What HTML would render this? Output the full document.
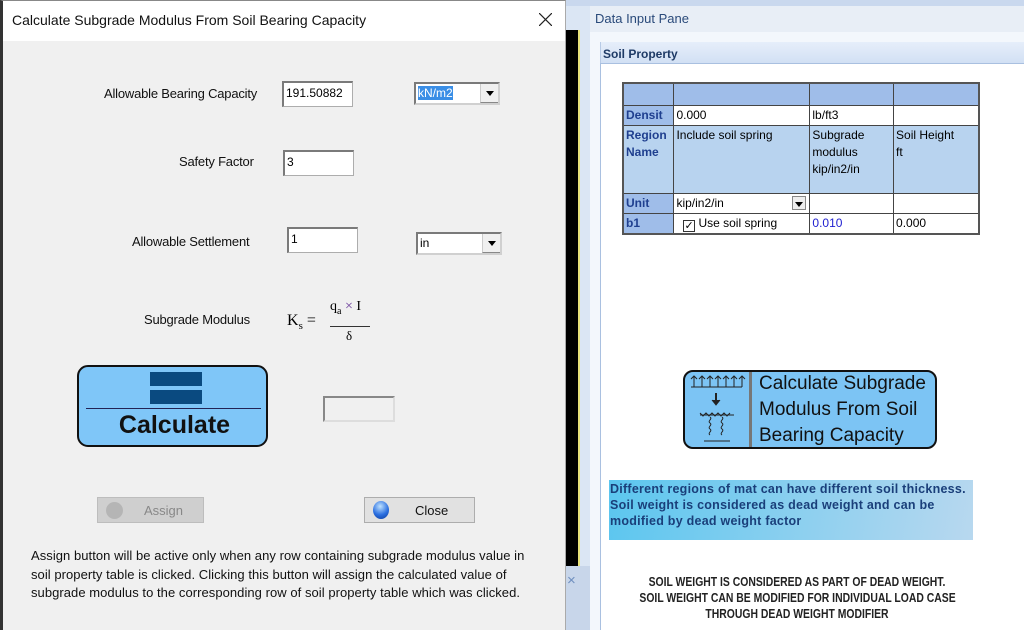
<!DOCTYPE html>
<html><head><meta charset="utf-8"><style>
*{box-sizing:border-box;margin:0;padding:0}
body{width:1024px;height:630px;position:relative;overflow:hidden;background:#dbe6f4;font-family:"Liberation Sans",sans-serif;font-size:12px;color:#000}
.a{position:absolute}
.lbl{font-size:13px;letter-spacing:-0.2px;color:#111}
.inp{background:#fff;border:1px solid #adadad;border-top:2px solid #7a7a7a;border-left:2px solid #7a7a7a;font-size:12px;padding:3px 2px;line-height:14px}
.dd{background:#fff;border:2px solid #7a7a7a;border-right-color:#d0d0d0;border-bottom-color:#d0d0d0;font-size:12px;padding:2px 2px}
.arr{position:absolute;right:0;top:0;bottom:0;width:18px;background:#f0f0f0;border-left:1px solid #ccc;border-bottom:1px solid #888}
.arr:after{content:"";position:absolute;left:5px;top:7px;border-left:4px solid transparent;border-right:4px solid transparent;border-top:5px solid #000}
table{border-collapse:collapse}
td{border:1px solid #444;font-size:12px;vertical-align:top;padding:1px 2px;line-height:17px}
.h{background:#9fbde9;font-weight:bold;color:#1f3f8f}
.b{background:#b8d3ef}
.nw{white-space:nowrap}
</style></head><body>
<div class="a" style="left:566px;top:0;width:458px;height:6px;background:#c9d8ee"></div>
<div class="a" style="left:566px;top:30px;width:14px;height:536px;background:#000;border-right:2px solid #e8e27a"></div>
<div class="a" style="left:566px;top:566px;width:24px;height:64px;background:#c8d6ea"></div>
<div class="a" style="left:567px;top:572px;font-size:15px;color:#6f8fbf">×</div>
<div class="a" style="left:590px;top:6px;width:434px;height:26px;background:#e8eef6"></div>
<div class="a" style="left:595px;top:11px;font-size:13px;color:#2a4a7a">Data Input Pane</div>
<div class="a" style="left:590px;top:32px;width:434px;height:598px;background:#f3f7fc"></div>
<div class="a" style="left:600px;top:42px;width:424px;height:21px;background:linear-gradient(#e6eefa,#d2e0f4);border-left:1px solid #b8cbe6"></div>
<div class="a" style="left:603px;top:47px;font-size:12px;font-weight:bold;color:#1e3a66">Soil Property</div>
<div class="a" style="left:600px;top:63px;width:424px;height:567px;background:#fff;border-left:1px solid #a9c0e0;border-top:1px solid #a9c0e0"></div>
<table class="a" style="left:622px;top:82px;width:358px;border:2px solid #555">
<tr style="height:22px"><td class="h" style="width:51px"></td><td class="h" style="width:137px"></td><td class="h" style="width:84px"></td><td class="h" style="width:86px"></td></tr>
<tr style="height:20px"><td class="h">Densit</td><td>0.000</td><td>lb/ft3</td><td></td></tr>
<tr style="height:68px"><td class="b" style="font-weight:bold;color:#1f3f8f;line-height:17px">Region Name</td><td class="b">Include soil spring</td><td class="b" style="line-height:17px">Subgrade modulus kip/in2/in</td><td class="b">Soil Height<br>ft</td></tr>
<tr style="height:19px"><td class="h">Unit</td><td style="position:relative">kip/in2/in<span style="position:absolute;right:3px;top:2px;width:14px;height:14px;background:#eee;border:1px solid #888"></span><span style="position:absolute;right:6px;top:8px;border-left:4px solid transparent;border-right:4px solid transparent;border-top:5px solid #000"></span></td><td></td><td></td></tr>
<tr style="height:19px"><td class="h">b1</td><td>&nbsp;&nbsp;<span style="display:inline-block;width:12px;height:12px;border:1px solid #333;vertical-align:-2px;font-size:11px;line-height:11px;text-align:center">✓</span> Use soil spring</td><td style="color:#2020d0">0.010</td><td>0.000</td></tr>
</table>
<div class="a" style="left:683px;top:370px;width:254px;height:79px;background:#7cc4f4;border:2px solid #111;border-radius:10px"></div>
<div class="a" style="left:749px;top:372px;width:3px;height:75px;background:#777"></div>
<svg class="a" style="left:688px;top:373px" width="58" height="72" viewBox="0 0 58 72" fill="none" stroke="#222" stroke-width="1">
<path d="M3 14H54"/><path d="M6 14V3M14 14V3M22 14V3M30 14V3M38 14V3M46 14V3M54 14V3"/>
<path d="M3 6l3-3 3 3M11 6l3-3 3 3M19 6l3-3 3 3M27 6l3-3 3 3M35 6l3-3 3 3M43 6l3-3 3 3M51 6l3-3 3 3"/>
<path d="M28 20v10" stroke-width="2"/><path d="M24 27l4 5 4-5" fill="#222"/>
<path d="M12 42h34M12 40l3 3 3-3 3 3 3-3 3 3 3-3 3 3 3-3 3 3 3-3"/>
<path d="M22 44c3 2-3 4 0 6s-3 4 0 6s-3 4 0 6M34 44c3 2-3 4 0 6s-3 4 0 6s-3 4 0 6M16 68h26"/>
</svg>
<div class="a nw" style="left:759px;top:371px;font-size:19px;line-height:26px;color:#111">Calculate Subgrade<br>Modulus From Soil<br>Bearing Capacity</div>
<div class="a" style="left:609px;top:480px;width:364px;height:60px;background:linear-gradient(100deg,#5bc6ef,#b8d8ef)"></div>
<div class="a nw" style="left:610px;top:481px;font-size:12.5px;letter-spacing:0.25px;line-height:16px;color:#1a3f7a;font-weight:bold">Different regions of mat can have different soil thickness.<br>Soil weight is considered as dead weight and can be<br>modified by dead weight factor</div>
<div class="a nw" style="left:600px;top:574px;width:394px;text-align:center;font-size:13px;line-height:16px;font-weight:bold;transform:scaleX(0.8);color:#222">SOIL WEIGHT IS CONSIDERED AS PART OF DEAD WEIGHT.<br>SOIL WEIGHT CAN BE MODIFIED FOR INDIVIDUAL LOAD CASE<br>THROUGH DEAD WEIGHT MODIFIER</div>

<div class="a" style="left:0;top:0;width:566px;height:630px;background:#f0f0f0;border-left:3px solid #333;border-right:1px solid #aaa;border-top:1px solid #888"></div>
<div class="a" style="left:3px;top:1px;width:562px;height:40px;background:#fff"></div>
<div class="a" style="left:12px;top:12px;font-size:14px;color:#111">Calculate Subgrade Modulus From Soil Bearing Capacity</div>
<svg class="a" style="left:539px;top:13px" width="13" height="13" viewBox="0 0 13 13" stroke="#222" stroke-width="1.2"><path d="M0 0L13 13M13 0L0 13"/></svg>

<div class="a lbl" style="left:104px;top:86px">Allowable Bearing Capacity</div>
<div class="a inp" style="left:282px;top:81px;width:71px;height:26px">191.50882</div>
<div class="a dd" style="left:414px;top:82px;width:86px;height:23px"><span style="background:#3a8ee6;color:#fff">kN/m2</span><span class="arr"></span></div>
<div class="a lbl" style="left:179px;top:154px">Safety Factor</div>
<div class="a inp" style="left:283px;top:150px;width:71px;height:26px">3</div>
<div class="a lbl" style="left:132px;top:234px">Allowable Settlement</div>
<div class="a inp" style="left:287px;top:227px;width:71px;height:26px">1</div>
<div class="a dd" style="left:416px;top:232px;width:86px;height:23px">in<span class="arr"></span></div>
<div class="a lbl" style="left:144px;top:312px">Subgrade Modulus</div>
<div class="a" style="left:287px;top:312px;font-family:'Liberation Serif',serif;font-size:16px">K<sub style="font-size:11px">s</sub> =</div>
<div class="a" style="left:330px;top:299px;font-family:'Liberation Serif',serif;font-size:14px">q<sub style="font-size:10px">a</sub> <span style="color:#6a3a9a">×</span> I</div>
<div class="a" style="left:330px;top:326px;width:40px;height:1px;background:#333"></div>
<div class="a" style="left:346px;top:328px;font-family:'Liberation Serif',serif;font-size:13px">δ</div>
<div class="a" style="left:77px;top:365px;width:191px;height:82px;background:#7fc6f8;border:2px solid #111;border-radius:11px"></div>
<div class="a" style="left:150px;top:372px;width:52px;height:14px;background:#0a4a80"></div>
<div class="a" style="left:150px;top:390px;width:52px;height:14px;background:#0a4a80"></div>
<div class="a" style="left:86px;top:408px;width:175px;height:1px;background:#225"></div>
<div class="a" style="left:77px;top:411px;width:195px;text-align:center;font-size:25px;font-weight:bold;color:#111">Calculate</div>
<div class="a" style="left:323px;top:396px;width:72px;height:26px;border:2px solid #888;border-right-color:#ddd;border-bottom-color:#ddd;background:#f0f0f0"></div>
<div class="a" style="left:97px;top:497px;width:107px;height:26px;background:#cfcfcf;border:1px solid #bdbdbd"></div>
<div class="a" style="left:106px;top:502px;width:17px;height:17px;border-radius:50%;background:#b5b5b5"></div>
<div class="a" style="left:144px;top:503px;font-size:13px;color:#888">Assign</div>
<div class="a" style="left:364px;top:497px;width:111px;height:26px;background:#e1e1e1;border:1px solid #adadad"></div>
<div class="a" style="left:373px;top:501px;width:16px;height:18px;border-radius:50%;background:radial-gradient(circle at 45% 30%,#bfe2ff,#2b6fe0 55%,#0b3a9a)"></div>
<div class="a" style="left:415px;top:503px;font-size:13px;color:#111">Close</div>
<div class="a nw" style="left:31px;top:547px;font-size:13px;line-height:18.5px;letter-spacing:0.05px;color:#111">Assign button will be active only when any row containing subgrade modulus value in<br>soil property table is clicked. Clicking this button will assign the calculated value of<br>subgrade modulus to the corresponding row of soil property table which was clicked.</div>
</body></html>
